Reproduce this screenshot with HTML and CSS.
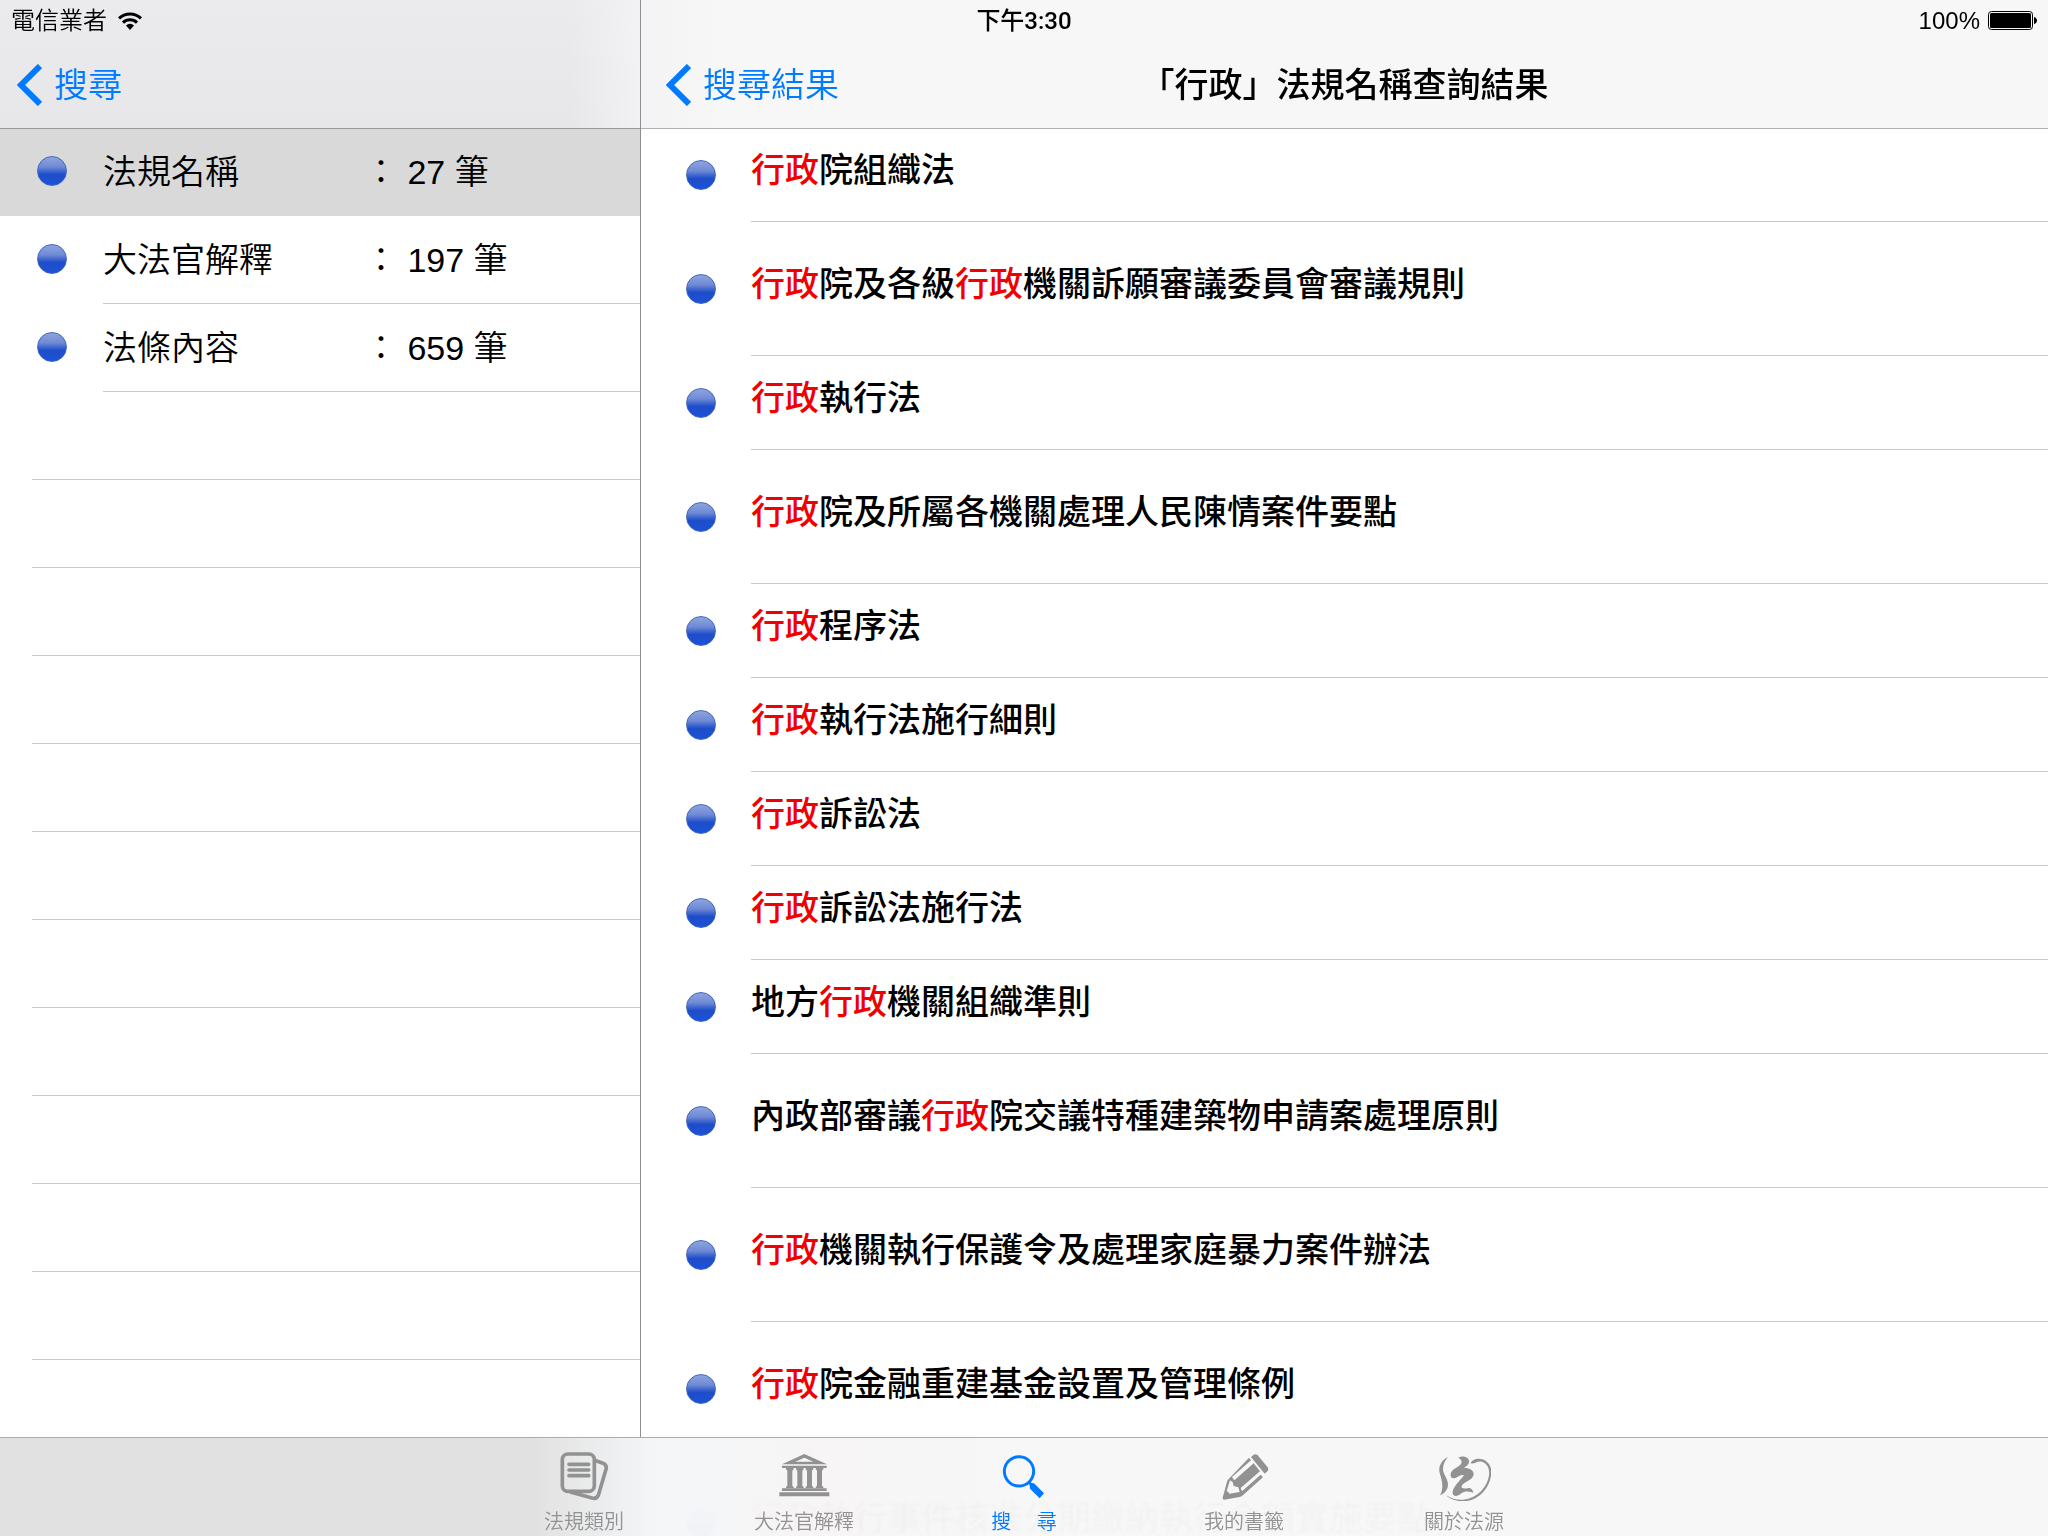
FILE: index.html
```html
<!DOCTYPE html>
<html lang="zh-Hant">
<head>
<meta charset="utf-8">
<meta name="viewport" content="width=device-width, initial-scale=1">
<title>「行政」法規名稱查詢結果</title>
<link rel="stylesheet" href="styles.css">
</head>
<body>
<div class="app">
  <div class="status">
    <div class="status-carrier">
      <span>電信業者</span>
      <svg class="wifi" viewBox="0 0 24 18" aria-hidden="true">
        <path d="M1 6.4a15.8 15.8 0 0 1 22 0M5 10.6a10 10 0 0 1 14 0" fill="none" stroke="#000" stroke-width="3"/>
        <path d="M12 18l-4-4.600a5.600 5.600 0 0 1 8 0z"/>
      </svg>
    </div>
    <div class="status-time">下午3:30</div>
    <div class="status-power">
      <span>100%</span>
      <svg class="battery" viewBox="0 0 49 19" aria-hidden="true">
        <rect x=".5" y=".5" width="44" height="18" rx="3" fill="none" stroke="#000"/>
        <rect x="2" y="2" width="41" height="15" rx="1.500"/>
        <path d="M46 6c4 1 4 6 0 7z"/>
      </svg>
    </div>
  </div>

  <aside class="panel sidebar">
    <header class="bar bar-side">
      <a class="back" href="#search">
        <svg class="chevron" viewBox="0 0 25 42" aria-hidden="true"><path d="M23 2L4 21l19 19" fill="none" stroke="currentColor" stroke-width="6"/></svg>
        <span>搜尋</span>
      </a>
    </header>
    <ul class="list">
      <li><a class="kind selected" href="#names"><i class="dot"></i><span class="kind-body"><span class="kind-name">法規名稱</span><span>： 27 筆</span></span></a></li>
      <li><a class="kind" href="#rulings"><i class="dot"></i><span class="kind-body"><span class="kind-name">大法官解釋</span><span>： 197 筆</span></span></a></li>
      <li><a class="kind" href="#articles"><i class="dot"></i><span class="kind-body"><span class="kind-name">法條內容</span><span>： 659 筆</span></span></a></li>
      <li class="blank"></li>
      <li class="blank"></li>
      <li class="blank"></li>
      <li class="blank"></li>
      <li class="blank"></li>
      <li class="blank"></li>
      <li class="blank"></li>
      <li class="blank"></li>
      <li class="blank"></li>
      <li class="blank"></li>
      <li class="blank"></li>
    </ul>
  </aside>

  <main class="panel results">
    <header class="bar bar-main">
      <a class="back" href="#results">
        <svg class="chevron" viewBox="0 0 25 42" aria-hidden="true"><path d="M23 2L4 21l19 19" fill="none" stroke="currentColor" stroke-width="6"/></svg>
        <span>搜尋結果</span>
      </a>
      <h1 class="title">「行政」法規名稱查詢結果</h1>
    </header>
    <ul class="list">
      <li><a class="law" href="#1"><i class="dot"></i><span class="law-name"><span><mark>行政</mark>院組織法</span></span></a></li>
      <li><a class="law tall" href="#2"><i class="dot"></i><span class="law-name"><span><mark>行政</mark>院及各級<mark>行政</mark>機關訴願審議委員會審議規則</span></span></a></li>
      <li><a class="law" href="#3"><i class="dot"></i><span class="law-name"><span><mark>行政</mark>執行法</span></span></a></li>
      <li><a class="law tall" href="#4"><i class="dot"></i><span class="law-name"><span><mark>行政</mark>院及所屬各機關處理人民陳情案件要點</span></span></a></li>
      <li><a class="law" href="#5"><i class="dot"></i><span class="law-name"><span><mark>行政</mark>程序法</span></span></a></li>
      <li><a class="law" href="#6"><i class="dot"></i><span class="law-name"><span><mark>行政</mark>執行法施行細則</span></span></a></li>
      <li><a class="law" href="#7"><i class="dot"></i><span class="law-name"><span><mark>行政</mark>訴訟法</span></span></a></li>
      <li><a class="law" href="#8"><i class="dot"></i><span class="law-name"><span><mark>行政</mark>訴訟法施行法</span></span></a></li>
      <li><a class="law" href="#9"><i class="dot"></i><span class="law-name"><span>地方<mark>行政</mark>機關組織準則</span></span></a></li>
      <li><a class="law tall" href="#10"><i class="dot"></i><span class="law-name"><span>內政部審議<mark>行政</mark>院交議特種建築物申請案處理原則</span></span></a></li>
      <li><a class="law tall" href="#11"><i class="dot"></i><span class="law-name"><span><mark>行政</mark>機關執行保護令及處理家庭暴力案件辦法</span></span></a></li>
      <li><a class="law tall" href="#12"><i class="dot"></i><span class="law-name"><span><mark>行政</mark>院金融重建基金設置及管理條例</span></span></a></li>
      <li><a class="law tall" href="#13"><i class="dot"></i><span class="law-name"><span><mark>行政</mark>執行事件核准分期繳納執行金額實施要點</span></span></a></li>
    </ul>
  </main>

  <nav class="tabs">
    <a class="tab" href="#categories">
      <svg viewBox="116 92 159 150" aria-hidden="true" fill="none" stroke="currentColor" stroke-width="11" stroke-linecap="round" stroke-linejoin="round">
        <rect x="129" y="101" width="96" height="112" rx="17"/>
        <path d="M149 132h59M149 149h59M149 166h59"/>
        <path d="M230 121l17 6q17 5 13 20l-22 75q-5 15-20 11l-62-17"/>
      </svg>
      <span>法規類別</span>
    </a>
    <a class="tab" href="#interpretations">
      <svg viewBox="773 92 159 150" aria-hidden="true" fill="currentColor">
        <path fill-rule="evenodd" d="M852 101l68 31H785zM852 112l-27 12h54z"/>
        <path d="M785 136h134v7H785zM785 204h134v8H785zM777 216h150v12H777z"/>
        <path d="M797 143h23v4l-4 4v45l4 4v4h-23v-4l4-4v-45l-4-4zM827 143h23v4l-4 4v45l4 4v4h-23v-4l4-4v-45l-4-4zM856 143h23v4l-4 4v45l4 4v4h-23v-4l4-4v-45l-4-4zM886 143h23v4l-4 4v45l4 4v4h-23v-4l4-4v-45l-4-4z"/>
      </svg>
      <span>大法官解釋</span>
    </a>
    <a class="tab active" href="#search" aria-current="page">
      <svg viewBox="113 92 159 150" aria-hidden="true">
        <circle cx="176" cy="153" r="44" fill="none" stroke="currentColor" stroke-width="9"/>
        <path d="M203 187l6-5 4 6 8 1 30 30-13 15-29-29-1-10z" fill="currentColor"/>
      </svg>
      <span>搜　 尋</span>
    </a>
    <a class="tab" href="#bookmarks">
      <svg viewBox="774 92 159 150" aria-hidden="true" fill="currentColor">
        <path d="M873 110l8-7q6-4 12 2l30 36q4 6 0 11l-9 8z"/>
        <path d="M867 112l6 8-57 50 7 10 58-51 19 24-58 50 4 10 56-50 7 8-63 56q-3 2-7 3l-46 8q-6 0-5-6l13-48q1-5 5-8zM810 180l-10 32q6 2 8 8l31-5-4-14-14-4-3-12z" fill-rule="evenodd"/>
      </svg>
      <span>我的書籤</span>
    </a>
    <a class="tab" href="#about">
      <svg viewBox="173 92 159 150" aria-hidden="true" fill="currentColor">
        <path d="M203 109C184 119 173 138 178 157C184 178 192 203 179 225C197 217 206 202 202 185C198 169 187 159 188 144C189 129 196 118 203 109z"/>
        <path d="M234 112C247 105 264 110 266 121C268 131 258 137 251 143C265 142 281 149 280 162C279 179 249 186 244 197C241 205 255 206 264 203C272 201 278 209 279 217C265 213 253 211 243 219C232 229 219 230 217 219C214 205 236 184 251 165C239 160 230 175 219 174C208 173 209 158 217 150C226 141 243 137 244 125C244 119 240 117 234 112z"/>
        <path d="M271 129C275 117 292 112 307 117C327 124 337 145 332 167C324 210 291 244 244 243C223 242 207 235 197 225C215 236 232 240 250 238C290 234 321 201 326 165C329 145 320 129 305 124C291 120 282 133 271 129z"/>
      </svg>
      <span>關於法源</span>
    </a>
  </nav>
</div>
</body>
</html>
```
FILE: styles.css
```css
* {
  box-sizing: border-box;
}

body {
  margin: 0;
  background: #fff;
  color: #000;
  font-family: "Liberation Sans", "Noto Sans CJK TC", sans-serif;
  font-size: 34px;
  line-height: 40px;
}

a {
  color: inherit;
  text-decoration: none;
}

.app {
  position: relative;
  display: grid;
  grid-template-columns: 640px minmax(0, 1fr);
  height: 100vh;
  overflow: hidden;
}

/* status bar, laid over both navigation bars */
.status {
  position: absolute;
  inset: 0 0 auto 0;
  z-index: 3;
  display: grid;
  grid-template-columns: 1fr auto 1fr;
  align-items: center;
  height: 41px;
  padding: 0 11px;
  font-size: 24px;
}

.status-carrier,
.status-power {
  display: flex;
  align-items: center;
  gap: 11px;
}

.status-carrier {
  font-weight: 350;
}

.status-power {
  justify-content: flex-end;
  gap: 8px;
}

.status-time {
  font-family: "Roboto", "Noto Sans CJK TC", sans-serif;
  font-weight: 500;
}

.wifi {
  width: 24px;
  height: 18px;
}

.battery {
  width: 49px;
  height: 19px;
}

/* panels */
.panel {
  min-width: 0;
  height: 100vh;
  overflow-y: auto;
  scrollbar-width: none;
}

.results {
  border-left: 1px solid #8e8e90;
}

.bar {
  position: sticky;
  top: 0;
  z-index: 2;
  display: grid;
  grid-template-columns: 1fr auto 1fr;
  align-items: center;
  height: 128px;
  padding: 41px 17px 0;
}

.bar-side {
  background: linear-gradient(90deg, rgba(242, 242, 244, 0) 570px, #f2f2f4 640px), linear-gradient(#ebebee, #e7e7e9);
  box-shadow: 0 1px 0 #98989a;
}

.bar-main {
  padding: 41px 25px 0;
  background: linear-gradient(90deg, #f3f3f5, #f7f7f7 80px);
  box-shadow: 0 1px 0 #b2b2b2;
}

.back {
  display: flex;
  align-items: center;
  gap: 12px;
  color: #007aff;
  font-weight: 350;
}

.chevron {
  width: 25px;
  height: 42px;
}

.title {
  margin: 0;
  font-size: 34px;
  font-weight: 500;
}

.list {
  margin: 0;
  padding: 0;
  list-style: none;
}

.dot {
  flex: none;
  width: 30px;
  height: 30px;
  border: 1px solid #3f66bd;
  border-radius: 50%;
  background: linear-gradient(#8ea4dd, #6f8bd6 35%, #1f4dca 62%, #1a52d8);
}

/* result kinds */
.kind {
  display: flex;
  align-items: center;
  gap: 36px;
  height: 88px;
  padding-left: 37px;
  font-weight: 350;
}

.kind .dot {
  margin-bottom: 3px;
}

.kind-body {
  display: flex;
  flex: 1;
  align-items: center;
  height: 88px;
  border-bottom: 1px solid #c8c7cc;
}

.kind-name {
  width: 261px;
}

.selected {
  background: #d9d9d9;
}

.selected .kind-body {
  border-color: transparent;
}

.blank {
  height: 88px;
  margin-left: 32px;
  border-bottom: 1px solid #c8c7cc;
}

/* laws found */
.law {
  display: flex;
  align-items: center;
  gap: 35px;
  height: 94px;
  padding-left: 45px;
  font-weight: 500;
}

.law-name {
  display: flex;
  flex: 1;
  align-items: center;
  height: 100%;
  padding-bottom: 10px;
  border-bottom: 1px solid #c8c7cc;
}

.tall {
  height: 134px;
}

mark {
  background: none;
  color: #f00000;
}

/* translucent tab bar over the end of both lists */
.tabs {
  position: absolute;
  inset: auto 0 0 0;
  z-index: 3;
  display: flex;
  justify-content: center;
  height: 99px;
  border-top: 1px solid #acacac;
  background: linear-gradient(90deg, #e1e1e1 530px, rgba(244, 246, 248, 0.985) 660px, rgba(247, 245, 245, 0.985) 840px, rgba(247, 247, 247, 0.985) 1040px);
  backdrop-filter: blur(1px);
}

.tab {
  display: flex;
  flex-direction: column;
  align-items: center;
  gap: 9px;
  width: 220px;
  padding-top: 13px;
  color: #929292;
  font-size: 20px;
  font-weight: 350;
  line-height: 24px;
  white-space: pre;
}

.tab svg {
  width: 53px;
  height: 50px;
}

.active {
  color: #007aff;
}
```
